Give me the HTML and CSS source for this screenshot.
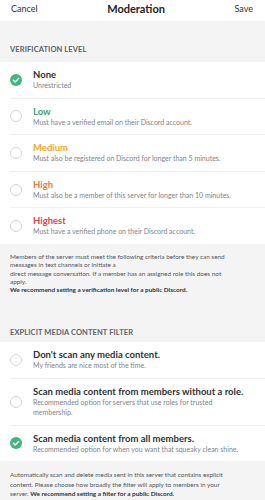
FILE: index.html
```html
<!DOCTYPE html>
<html>
<head>
<meta charset="utf-8">
<link rel="stylesheet" href="styles.css">
</head>
<body>
<div class="app">
  <header class="topbar">
    <span class="btn">Cancel</span>
    <span class="title">Moderation</span>
    <span class="btn">Save</span>
  </header>

  <div class="section-head first">VERIFICATION LEVEL</div>
  <div class="list">
    <div class="row">
      <span class="radio checked"><svg viewBox="0 0 12 12" width="12" height="12"><circle cx="6" cy="6" r="6" fill="#43b581"/><path d="M3.4 6.2 L5.2 7.9 L8.6 4.4" fill="none" stroke="#fff" stroke-width="1.4" stroke-linecap="round" stroke-linejoin="round"/></svg></span>
      <div class="txt"><div class="t">None</div><div class="s">Unrestricted</div></div>
    </div>
    <div class="row">
      <span class="radio"></span>
      <div class="txt"><div class="t green">Low</div><div class="s">Must have a verified email on their Discord account.</div></div>
    </div>
    <div class="row">
      <span class="radio"></span>
      <div class="txt"><div class="t yellow">Medium</div><div class="s">Must also be registered on Discord for longer than 5 minutes.</div></div>
    </div>
    <div class="row">
      <span class="radio"></span>
      <div class="txt"><div class="t orange">High</div><div class="s">Must also be a member of this server for longer than 10 minutes.</div></div>
    </div>
    <div class="row">
      <span class="radio"></span>
      <div class="txt"><div class="t red">Highest</div><div class="s">Must have a verified phone on their Discord account.</div></div>
    </div>
  </div>
  <div class="note">
    <p>Members of the server must meet the following criteria before they can send<br>messages in text channels or initiate a<br>direct message conversation. If a member has an assigned role this does not<br>apply.<br><b>We recommend setting a verification level for a public Discord.</b></p>
  </div>
  <div class="section-head second">EXPLICIT MEDIA CONTENT FILTER</div>
  <div class="list">
    <div class="row">
      <span class="radio"></span>
      <div class="txt"><div class="t">Don't scan any media content.</div><div class="s">My friends are nice most of the time.</div></div>
    </div>
    <div class="row">
      <span class="radio"></span>
      <div class="txt"><div class="t">Scan media content from members without a role.</div><div class="s">Recommended option for servers that use roles for trusted<br>membership.</div></div>
    </div>
    <div class="row">
      <span class="radio checked"><svg viewBox="0 0 12 12" width="12" height="12"><circle cx="6" cy="6" r="6" fill="#43b581"/><path d="M3.4 6.2 L5.2 7.9 L8.6 4.4" fill="none" stroke="#fff" stroke-width="1.4" stroke-linecap="round" stroke-linejoin="round"/></svg></span>
      <div class="txt"><div class="t">Scan media content from all members.</div><div class="s">Recommended option for when you want that squeaky clean shine.</div></div>
    </div>
  </div>
  <div class="note last">
    <p>Automatically scan and delete media sent in this server that contains explicit<br>content. Please choose how broadly the filter will apply to members in your<br>server. <b>We recommend setting a filter for a public Discord.</b></p>
  </div>
</div>
</body>
</html>
```

FILE: styles.css
```css
* { box-sizing: border-box; }
html, body { margin: 0; padding: 0; }
body {
  font-family: Lato, "Open Sans", "Liberation Sans", sans-serif;
  background: #f4f4f5;
  color: #2e3338;
  width: 265px;
  height: 500px;
  overflow: hidden;
}
.app { display: flex; flex-direction: column; }
.topbar {
  height: 21px;
  background: #fff;
  display: flex;
  justify-content: space-between;
  align-items: flex-start;
  padding: 3px 12px 0 11px;
  line-height: 12px;
}
.btn { font-size: 9px; color: #2e3338; }
.title { font-size: 11px; font-weight: 700; color: #1e2124; }
.section-head {
  font-size: 7.5px;
  font-weight: 700;
  color: #5e6269;
  line-height: 8px;
  padding: 0 10px;
  letter-spacing: 0.1px;
}
.section-head.first { padding-top: 25px; padding-bottom: 8px; }
.section-head.second { padding-top: 34.5px; padding-bottom: 5px; }
.list { background: #fff; }
.row {
  display: flex;
  align-items: center;
  margin-left: 10px;
  padding: 7px 0 7.1px;
  border-bottom: 1px solid #efeff0;
}
.row:last-child { border-bottom: none; }
.radio {
  width: 12px;
  height: 12px;
  border-radius: 50%;
  border: 1px solid #d4d5d7;
  flex: none;
  display: flex;
  margin-right: 11px;
}
.radio.checked { border: none; }
.radio svg { display: block; }
.txt { display: flex; flex-direction: column; }
.t { font-size: 9.5px; font-weight: 700; line-height: 11px; color: #2e3338; }
.t.green { color: #3ca374; }
.t.yellow { color: #f6a623; }
.t.orange { color: #f2793a; }
.t.red { color: #ec4145; }
.s { font-size: 7px; line-height: 10.5px; color: #80848a; }
.note { padding: 9px 10px 0; }
.note p {
  margin: 0;
  font-size: 6.4px;
  line-height: 8.3px;
  color: #4f545c;
}
.note b { color: #2e3338; font-weight: 700; }
.note.last { padding-top: 9px; }
.note.last p { line-height: 9.3px; }
```
